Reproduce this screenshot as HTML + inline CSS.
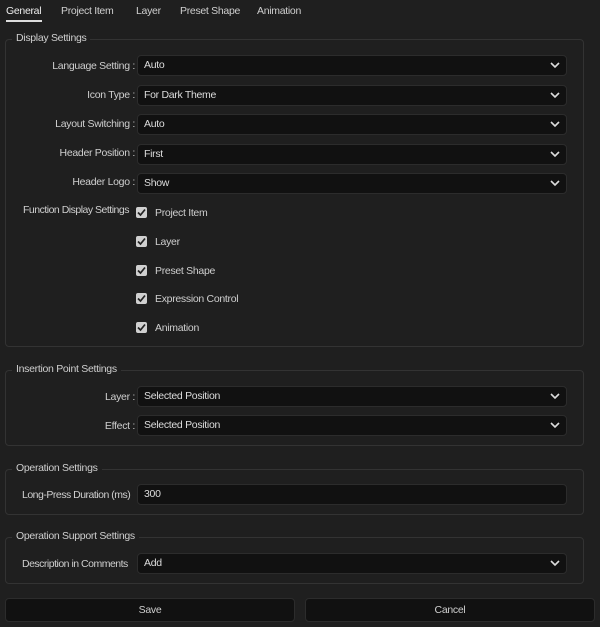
<!DOCTYPE html>
<html><head><style>
body{margin:0;width:600px;height:627px;background:#1f1f1f;font-family:"Liberation Sans",sans-serif;font-size:10.5px;letter-spacing:-0.3px;color:#d4d4d4;position:relative;overflow:hidden}
.a{position:absolute}
.tab{position:absolute;top:5px;color:#cfcfcf}
.fs{position:absolute;left:5px;width:577px;border:1px solid #333;border-radius:4px}
.lg{position:absolute;left:6px;top:-8px;background:#1f1f1f;padding:0 4px;color:#cfcfcf}
.lb{position:absolute;right:465px;text-align:right;white-space:nowrap;color:#cfcfcf}
.sel{position:absolute;left:137px;width:430px;height:21px;background:#111;border:1px solid #2c2c2c;border-radius:4px;box-sizing:border-box;padding-left:6px;line-height:19px;color:#ddd}
.sel svg{position:absolute;right:6px;top:6px}
.cb{position:absolute;left:136px;width:11px;height:11px;background:#d0d0d0;border-radius:2px}
.cb svg{position:absolute;left:1px;top:1px}
.ct{position:absolute;left:155px;color:#cfcfcf}
.btn{position:absolute;top:598px;height:24px;width:290px;background:#111;border:1px solid #2c2c2c;border-radius:4px;box-sizing:border-box;text-align:center;line-height:22px;color:#cfcfcf}
</style></head><body>
<div class="tab" style="left:6px;color:#eee">General</div>
<div class="a" style="left:6px;top:20px;width:36px;height:2px;background:#ddd"></div>
<div class="tab" style="left:61px">Project Item</div>
<div class="tab" style="left:136px">Layer</div>
<div class="tab" style="left:180px">Preset Shape</div>
<div class="tab" style="left:257px">Animation</div>

<div class="fs" style="top:39px;height:306px"><div class="lg">Display Settings</div></div>
<div class="lb" style="top:60px">Language Setting :</div>
<div class="sel" style="top:55px">Auto<svg width="10" height="7"><path d="M1 1L5 5L9 1" stroke="#ddd" stroke-width="1.6" fill="none"/></svg></div>
<div class="lb" style="top:89px">Icon Type :</div>
<div class="sel" style="top:85px">For Dark Theme<svg width="10" height="7"><path d="M1 1L5 5L9 1" stroke="#ddd" stroke-width="1.6" fill="none"/></svg></div>
<div class="lb" style="top:118px">Layout Switching :</div>
<div class="sel" style="top:114px">Auto<svg width="10" height="7"><path d="M1 1L5 5L9 1" stroke="#ddd" stroke-width="1.6" fill="none"/></svg></div>
<div class="lb" style="top:147px">Header Position :</div>
<div class="sel" style="top:144px">First<svg width="10" height="7"><path d="M1 1L5 5L9 1" stroke="#ddd" stroke-width="1.6" fill="none"/></svg></div>
<div class="lb" style="top:176px">Header Logo :</div>
<div class="sel" style="top:173px">Show<svg width="10" height="7"><path d="M1 1L5 5L9 1" stroke="#ddd" stroke-width="1.6" fill="none"/></svg></div>
<div class="a" style="left:23px;top:204px;color:#cfcfcf;letter-spacing:-0.5px">Function Display Settings</div>
<div class="cb" style="top:207px"><svg width="9" height="9"><path d="M1 4.5L3.5 7L8 1.5" stroke="#222" stroke-width="1.7" fill="none"/></svg></div><div class="ct" style="top:207px">Project Item</div>
<div class="cb" style="top:236px"><svg width="9" height="9"><path d="M1 4.5L3.5 7L8 1.5" stroke="#222" stroke-width="1.7" fill="none"/></svg></div><div class="ct" style="top:236px">Layer</div>
<div class="cb" style="top:265px"><svg width="9" height="9"><path d="M1 4.5L3.5 7L8 1.5" stroke="#222" stroke-width="1.7" fill="none"/></svg></div><div class="ct" style="top:265px">Preset Shape</div>
<div class="cb" style="top:293px"><svg width="9" height="9"><path d="M1 4.5L3.5 7L8 1.5" stroke="#222" stroke-width="1.7" fill="none"/></svg></div><div class="ct" style="top:293px">Expression Control</div>
<div class="cb" style="top:322px"><svg width="9" height="9"><path d="M1 4.5L3.5 7L8 1.5" stroke="#222" stroke-width="1.7" fill="none"/></svg></div><div class="ct" style="top:322px">Animation</div>

<div class="fs" style="top:370px;height:74px"><div class="lg">Insertion Point Settings</div></div>
<div class="lb" style="top:391px">Layer :</div>
<div class="sel" style="top:386px">Selected Position<svg width="10" height="7"><path d="M1 1L5 5L9 1" stroke="#ddd" stroke-width="1.6" fill="none"/></svg></div>
<div class="lb" style="top:420px">Effect :</div>
<div class="sel" style="top:415px">Selected Position<svg width="10" height="7"><path d="M1 1L5 5L9 1" stroke="#ddd" stroke-width="1.6" fill="none"/></svg></div>

<div class="fs" style="top:469px;height:44px"><div class="lg">Operation Settings</div></div>
<div class="a" style="left:22px;top:489px;color:#cfcfcf;letter-spacing:-0.5px">Long-Press Duration (ms)</div>
<div class="sel" style="top:484px">300</div>

<div class="fs" style="top:537px;height:45px"><div class="lg">Operation Support Settings</div></div>
<div class="a" style="left:22px;top:558px;color:#cfcfcf;letter-spacing:-0.5px">Description in Comments</div>
<div class="sel" style="top:553px">Add<svg width="10" height="7"><path d="M1 1L5 5L9 1" stroke="#ddd" stroke-width="1.6" fill="none"/></svg></div>

<div class="btn" style="left:5px">Save</div>
<div class="btn" style="left:305px">Cancel</div>
</body></html>
